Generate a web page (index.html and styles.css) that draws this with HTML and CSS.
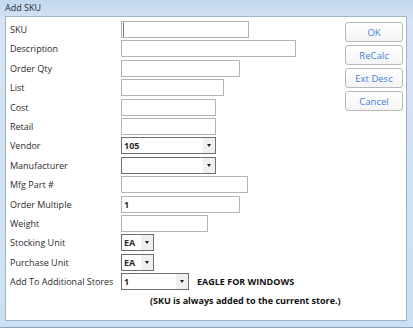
FILE: index.html
```html
<!DOCTYPE html>
<html lang="en">
<head>
  <meta charset="UTF-8">
  <title>Add SKU</title>
  <link rel="stylesheet" href="styles.css">
</head>
<body>
  <div class="window">
    <div class="title-bar">Add SKU</div>
    <div class="client">
      <div class="form">
        <label>SKU</label>
        <div class="field"><div class="text-box caret" style="width: 128px"></div></div>
        <label>Description</label>
        <div class="field"><div class="text-box" style="width: 175px"></div></div>
        <label>Order Qty</label>
        <div class="field"><div class="text-box" style="width: 119px"></div></div>
        <label>List</label>
        <div class="field"><div class="text-box" style="width: 103px"></div></div>
        <label>Cost</label>
        <div class="field"><div class="text-box" style="width: 95px"></div></div>
        <label>Retail</label>
        <div class="field"><div class="text-box" style="width: 95px"></div></div>
        <label>Vendor</label>
        <div class="field"><div class="combo" style="width: 95px"><span>105</span><i class="arrow"></i></div></div>
        <label>Manufacturer</label>
        <div class="field"><div class="combo" style="width: 95px"><span></span><i class="arrow"></i></div></div>
        <label>Mfg Part #</label>
        <div class="field"><div class="text-box" style="width: 127px"></div></div>
        <label>Order Multiple</label>
        <div class="field"><div class="text-box" style="width: 119px"><span>1</span></div></div>
        <label>Weight</label>
        <div class="field"><div class="text-box" style="width: 87px"></div></div>
        <label>Stocking Unit</label>
        <div class="field"><div class="combo" style="width: 33px"><span>EA</span><i class="arrow"></i></div></div>
        <label>Purchase Unit</label>
        <div class="field"><div class="combo" style="width: 33px"><span>EA</span><i class="arrow"></i></div></div>
        <label>Add To Additional Stores</label>
        <div class="field">
          <div class="combo" style="width: 68px"><span>1</span><i class="arrow"></i></div>
          <b class="store-name">EAGLE FOR WINDOWS</b>
        </div>
        <div class="note">(SKU is always added to the current store.)</div>
      </div>
      <div class="buttons">
        <button>OK</button>
        <button>ReCalc</button>
        <button>Ext Desc</button>
        <button>Cancel</button>
      </div>
    </div>
  </div>
</body>
</html>
```

FILE: styles.css
```css
body {
  margin: 0;
  width: 413px;
  height: 328px;
  overflow: hidden;
  font-family: "Open Sans", "Liberation Sans", sans-serif;
  font-size: 9px;
  color: #2b2b2b;
}

.window {
  height: 328px;
  box-sizing: border-box;
  background: linear-gradient(to bottom, #c2d7ee, #d5e4f4 20px, #cddff2);
  padding: 0 6px 6px 5px;
  border-bottom: 1px solid #8aa3c0;
  display: flex;
  flex-direction: column;
}

.title-bar {
  height: 16px;
  line-height: 15px;
  color: #1e2a38;
  font-size: 9px;
}

.client {
  flex: 1;
  background: #fff;
  border: 1px solid #9fb3c9;
  display: flex;
  justify-content: space-between;
}

.form {
  display: grid;
  grid-template-columns: 111px auto;
  grid-auto-rows: 19.4px;
  padding: 4px 0 0 4px;
}

.form label {
  line-height: 17px;
}

.field {
  display: flex;
  align-items: flex-start;
  gap: 8px;
}

.text-box, .combo {
  height: 17px;
  box-sizing: border-box;
  border: 1px solid #b4b4b4;
  background: #fff;
  font-weight: 700;
  line-height: 15px;
  padding-left: 2px;
}

.caret {
  box-shadow: inset 2px 0 0 -1px #fff, inset 3px 0 0 -1px #777;
}

.combo {
  border-color: #6e6e6e;
  display: flex;
  justify-content: space-between;
  padding-right: 0;
}

.combo .arrow {
  width: 12px;
  background: #f0f0f0;
  position: relative;
}

.combo .arrow::after {
  content: "";
  position: absolute;
  left: 4px;
  top: 6px;
  border-left: 2.5px solid transparent;
  border-right: 2.5px solid transparent;
  border-top: 3px solid #222;
}

.store-name {
  line-height: 17px;
  color: #111;
}

.note {
  grid-column: 1 / 3;
  padding-left: 140px;
  line-height: 17px;
  font-weight: 700;
  color: #111;
}

.buttons {
  display: flex;
  flex-direction: column;
  gap: 3px;
  padding: 5px 3px 0 0;
}

.buttons button {
  width: 58px;
  height: 20px;
  border: 1px solid #b9b9b9;
  border-radius: 3px;
  background: linear-gradient(to bottom, #fff, #f4f4f4);
  color: #3f7fd6;
  font-family: inherit;
  font-size: 9.5px;
  padding: 0;
}
```
